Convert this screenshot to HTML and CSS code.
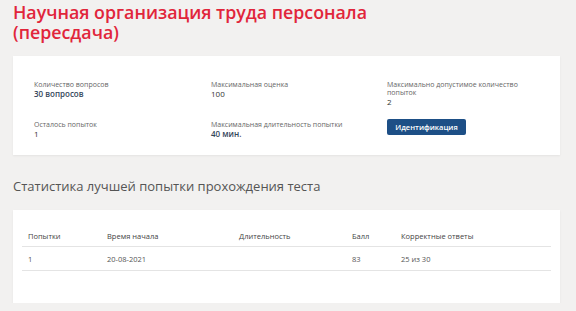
FILE: index.html
```html
<!DOCTYPE html>
<html lang="ru">
<head>
<meta charset="utf-8">
<title>Тест</title>
<link rel="stylesheet" href="styles.css">
</head>
<body>
<div class="page">
  <h1 class="title">Научная организация труда персонала (пересдача)</h1>
  <section class="card info">
    <div class="info-grid">
      <div class="item">
        <div class="label">Количество вопросов</div>
        <div class="value strong">30 вопросов</div>
      </div>
      <div class="item">
        <div class="label">Максимальная оценка</div>
        <div class="value">100</div>
      </div>
      <div class="item">
        <div class="label">Максимально допустимое количество<br>попыток</div>
        <div class="value">2</div>
      </div>
      <div class="item">
        <div class="label">Осталось попыток</div>
        <div class="value">1</div>
      </div>
      <div class="item">
        <div class="label">Максимальная длительность попытки</div>
        <div class="value strong">40 мин.</div>
      </div>
      <div class="item">
        <button class="btn">Идентификация</button>
      </div>
    </div>
  </section>
  <h2 class="subtitle">Статистика лучшей попытки прохождения теста</h2>
  <section class="card stats">
    <table class="table">
      <thead>
        <tr>
          <th class="c1">Попытки</th>
          <th class="c2">Время начала</th>
          <th class="c3">Длительность</th>
          <th class="c4">Балл</th>
          <th class="c5">Корректные ответы</th>
        </tr>
      </thead>
      <tbody>
        <tr>
          <td>1</td>
          <td>20-08-2021</td>
          <td></td>
          <td>83</td>
          <td>25 из 30</td>
        </tr>
      </tbody>
    </table>
  </section>
</div>
</body>
</html>
```
FILE: styles.css
```css
html, body {
  margin: 0;
  padding: 0;
  background: #f2f1f0;
  font-family: "Open Sans", "Liberation Sans", sans-serif;
}
.page {
  padding: 2px 16px 0 13px;
}
.title {
  margin: 0;
  font-size: 17.8px;
  line-height: 20px;
  font-weight: 600;
  color: #e1253b;
  width: 380px;
}
.card {
  background: #fff;
  box-shadow: 0 1px 2px rgba(0,0,0,0.06);
}
.info {
  margin-top: 14px;
  height: 99px;
  box-sizing: border-box;
  padding: 25px 10px 0 21px;
}
.info-grid {
  display: grid;
  grid-template-columns: 177px 176px 1fr;
  grid-template-rows: 40px 30px;
}
.label {
  font-size: 7px;
  line-height: 8px;
  color: #666;
}
.value {
  font-size: 8px;
  line-height: 9px;
  color: #333;
}
.value.strong {
  font-weight: 600;
  color: #34465a;
}
.btn {
  display: block;
  border: none;
  background: #1d4f86;
  color: #fff;
  font-family: inherit;
  font-size: 7.5px;
  font-weight: 600;
  width: 79px;
  height: 16px;
  border-radius: 2px;
  padding: 0;
  margin-top: -2px;
}
.subtitle {
  margin: 22px 0 0 0;
  font-size: 13px;
  line-height: 18px;
  font-weight: 400;
  color: #555;
}
.stats {
  margin-top: 15px;
  height: 93px;
  box-sizing: border-box;
  padding: 16px 9px 0 9px;
}
.table {
  width: 100%;
  border-collapse: collapse;
  font-size: 7.5px;
}
.table th, .table td {
  text-align: left;
  padding: 0 0 0 6px;
  height: 23px;
  border-bottom: 1px solid #e4e4e4;
}
.table th {
  font-weight: 400;
  color: #444;
  height: 20px;
}
.table td {
  color: #555;
}
.c1 { width: 73px; }
.c2 { width: 126px; }
.c3 { width: 107px; }
.c4 { width: 43px; }
```
